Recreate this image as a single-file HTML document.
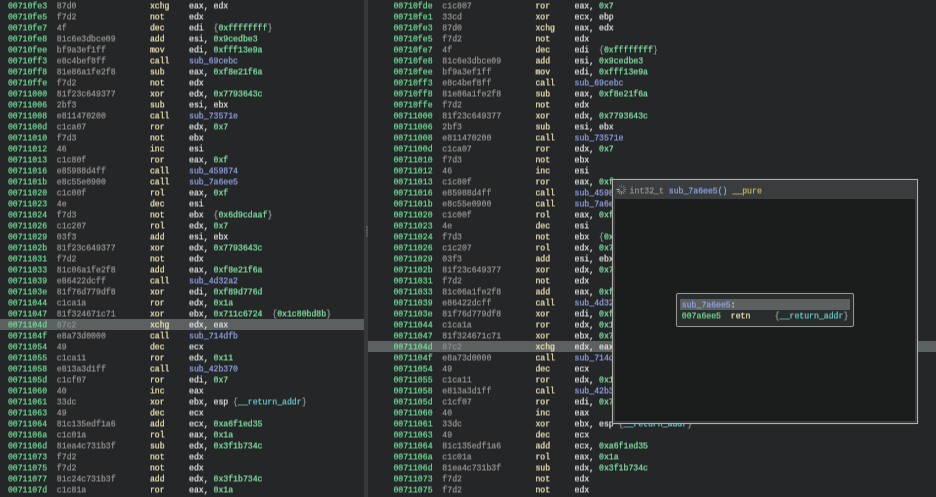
<!DOCTYPE html>
<html><head><meta charset="utf-8"><title>disassembly</title>
<style>
html,body{margin:0;padding:0;background:#242628;}
body{width:936px;height:497px;overflow:hidden;position:relative;font-family:"Liberation Mono","DejaVu Sans Mono",monospace;font-size:8.17px;line-height:11px;color:#e2e2e2;}
.pane{position:absolute;top:0;height:497px;overflow:hidden;background:#242628;}
#lp{left:0;width:364px;}
#rp{left:368px;width:568px;}
.rows{position:absolute;top:0;left:0;right:0;filter:url(#vb);}
.r{white-space:pre;height:11px;}
.r,.t,.l{-webkit-text-stroke:0.2px;}
#lp .r{padding-left:7.9px;}
#rp .r{padding-left:25.4px;}
.bar{position:absolute;left:0;right:0;height:11px;background:#5b6060;}
.a{color:#6ee096;}
.b{color:#9a9896;}
.hl .b{color:#8c9090;}
.m{color:#efe4b4;}
.n{color:#80e2a2;}
.s{color:#92a4e4;}
.p{color:#94acd8;}
.k{color:#c9b95c;}
.g{color:#9a9a9a;}
.v{color:#68cccc;}
#split{position:absolute;left:364px;top:0;width:4px;height:497px;background:#34383a;box-shadow:0 0 1px #34383a;}
#grip{position:absolute;left:366px;top:226px;width:2px;height:11px;background:repeating-linear-gradient(to bottom,#515556 0,#515556 2px,#45494a 2px,#45494a 3px);}
#pop{position:absolute;left:612px;top:179px;width:304px;height:243px;border:1px solid #b0aca8;background:#393d3e;box-shadow:0 0 1px rgba(176,172,168,.6);}
#pop .hd{position:absolute;left:0;top:0;right:0;height:19px;}
#pop .bd{position:absolute;left:2px;top:19px;right:2px;bottom:2px;background:#1b1d1d;}
#pop .t{position:absolute;left:16.6px;top:5px;white-space:pre;filter:url(#vb);}
#ib{position:absolute;left:676px;top:293px;width:176px;height:32px;border:1px solid #96928e;border-radius:2px;background:#2a2d2e;box-shadow:0 0 1px rgba(150,146,142,.7);}
#ib .h{position:absolute;left:3px;top:5px;width:170px;height:11px;background:#5b6060;}
#ib .l{position:absolute;left:4.8px;white-space:pre;filter:url(#vb);}
</style></head><body>
<svg width="0" height="0" style="position:absolute"><defs><filter id="vb" x="-2%" y="-2%" width="104%" height="104%" color-interpolation-filters="sRGB"><feConvolveMatrix order="1 2" kernelMatrix="0.5 0.5" targetX="0" targetY="1" edgeMode="duplicate" preserveAlpha="false"/></filter></defs></svg>
<div class="pane" id="lp"><div class="bar" style="top:319px"></div><div class="rows">
<div class="r"><span class="a">00710fe3</span>  <span class="b">87d0</span>               <span class="m">xchg</span>    eax, edx</div>
<div class="r"><span class="a">00710fe5</span>  <span class="b">f7d2</span>               <span class="m">not</span>     edx</div>
<div class="r"><span class="a">00710fe7</span>  <span class="b">4f</span>                 <span class="m">dec</span>     edi  <span class="g">{</span><span class="n">0xffffffff</span><span class="g">}</span></div>
<div class="r"><span class="a">00710fe8</span>  <span class="b">81c6e3dbce09</span>       <span class="m">add</span>     esi, <span class="n">0x9cedbe3</span></div>
<div class="r"><span class="a">00710fee</span>  <span class="b">bf9a3ef1ff</span>         <span class="m">mov</span>     edi, <span class="n">0xfff13e9a</span></div>
<div class="r"><span class="a">00710ff3</span>  <span class="b">e8c4bef8ff</span>         <span class="m">call</span>    <span class="s">sub_69cebc</span></div>
<div class="r"><span class="a">00710ff8</span>  <span class="b">81e86a1fe2f8</span>       <span class="m">sub</span>     eax, <span class="n">0xf8e21f6a</span></div>
<div class="r"><span class="a">00710ffe</span>  <span class="b">f7d2</span>               <span class="m">not</span>     edx</div>
<div class="r"><span class="a">00711000</span>  <span class="b">81f23c649377</span>       <span class="m">xor</span>     edx, <span class="n">0x7793643c</span></div>
<div class="r"><span class="a">00711006</span>  <span class="b">2bf3</span>               <span class="m">sub</span>     esi, ebx</div>
<div class="r"><span class="a">00711008</span>  <span class="b">e811470200</span>         <span class="m">call</span>    <span class="s">sub_73571e</span></div>
<div class="r"><span class="a">0071100d</span>  <span class="b">c1ca07</span>             <span class="m">ror</span>     edx, <span class="n">0x7</span></div>
<div class="r"><span class="a">00711010</span>  <span class="b">f7d3</span>               <span class="m">not</span>     ebx</div>
<div class="r"><span class="a">00711012</span>  <span class="b">46</span>                 <span class="m">inc</span>     esi</div>
<div class="r"><span class="a">00711013</span>  <span class="b">c1c80f</span>             <span class="m">ror</span>     eax, <span class="n">0xf</span></div>
<div class="r"><span class="a">00711016</span>  <span class="b">e85988d4ff</span>         <span class="m">call</span>    <span class="s">sub_459874</span></div>
<div class="r"><span class="a">0071101b</span>  <span class="b">e8c55e0900</span>         <span class="m">call</span>    <span class="s">sub_7a6ee5</span></div>
<div class="r"><span class="a">00711020</span>  <span class="b">c1c00f</span>             <span class="m">rol</span>     eax, <span class="n">0xf</span></div>
<div class="r"><span class="a">00711023</span>  <span class="b">4e</span>                 <span class="m">dec</span>     esi</div>
<div class="r"><span class="a">00711024</span>  <span class="b">f7d3</span>               <span class="m">not</span>     ebx  <span class="g">{</span><span class="n">0x6d9cdaaf</span><span class="g">}</span></div>
<div class="r"><span class="a">00711026</span>  <span class="b">c1c207</span>             <span class="m">rol</span>     edx, <span class="n">0x7</span></div>
<div class="r"><span class="a">00711029</span>  <span class="b">03f3</span>               <span class="m">add</span>     esi, ebx</div>
<div class="r"><span class="a">0071102b</span>  <span class="b">81f23c649377</span>       <span class="m">xor</span>     edx, <span class="n">0x7793643c</span></div>
<div class="r"><span class="a">00711031</span>  <span class="b">f7d2</span>               <span class="m">not</span>     edx</div>
<div class="r"><span class="a">00711033</span>  <span class="b">81c06a1fe2f8</span>       <span class="m">add</span>     eax, <span class="n">0xf8e21f6a</span></div>
<div class="r"><span class="a">00711039</span>  <span class="b">e86422dcff</span>         <span class="m">call</span>    <span class="s">sub_4d32a2</span></div>
<div class="r"><span class="a">0071103e</span>  <span class="b">81f76d779df8</span>       <span class="m">xor</span>     edi, <span class="n">0xf89d776d</span></div>
<div class="r"><span class="a">00711044</span>  <span class="b">c1ca1a</span>             <span class="m">ror</span>     edx, <span class="n">0x1a</span></div>
<div class="r"><span class="a">00711047</span>  <span class="b">81f324671c71</span>       <span class="m">xor</span>     ebx, <span class="n">0x711c6724</span>  <span class="g">{</span><span class="n">0x1c80bd8b</span><span class="g">}</span></div>
<div class="r hl"><span class="a">0071104d</span>  <span class="b">87c2</span>               <span class="m">xchg</span>    edx, eax</div>
<div class="r"><span class="a">0071104f</span>  <span class="b">e8a73d0000</span>         <span class="m">call</span>    <span class="s">sub_714dfb</span></div>
<div class="r"><span class="a">00711054</span>  <span class="b">49</span>                 <span class="m">dec</span>     ecx</div>
<div class="r"><span class="a">00711055</span>  <span class="b">c1ca11</span>             <span class="m">ror</span>     edx, <span class="n">0x11</span></div>
<div class="r"><span class="a">00711058</span>  <span class="b">e813a3d1ff</span>         <span class="m">call</span>    <span class="s">sub_42b370</span></div>
<div class="r"><span class="a">0071105d</span>  <span class="b">c1cf07</span>             <span class="m">ror</span>     edi, <span class="n">0x7</span></div>
<div class="r"><span class="a">00711060</span>  <span class="b">40</span>                 <span class="m">inc</span>     eax</div>
<div class="r"><span class="a">00711061</span>  <span class="b">33dc</span>               <span class="m">xor</span>     ebx, esp <span class="g">{</span><span class="v">__return_addr</span><span class="g">}</span></div>
<div class="r"><span class="a">00711063</span>  <span class="b">49</span>                 <span class="m">dec</span>     ecx</div>
<div class="r"><span class="a">00711064</span>  <span class="b">81c135edf1a6</span>       <span class="m">add</span>     ecx, <span class="n">0xa6f1ed35</span></div>
<div class="r"><span class="a">0071106a</span>  <span class="b">c1c01a</span>             <span class="m">rol</span>     eax, <span class="n">0x1a</span></div>
<div class="r"><span class="a">0071106d</span>  <span class="b">81ea4c731b3f</span>       <span class="m">sub</span>     edx, <span class="n">0x3f1b734c</span></div>
<div class="r"><span class="a">00711073</span>  <span class="b">f7d2</span>               <span class="m">not</span>     edx</div>
<div class="r"><span class="a">00711075</span>  <span class="b">f7d2</span>               <span class="m">not</span>     edx</div>
<div class="r"><span class="a">00711077</span>  <span class="b">81c24c731b3f</span>       <span class="m">add</span>     edx, <span class="n">0x3f1b734c</span></div>
<div class="r"><span class="a">0071107d</span>  <span class="b">c1c81a</span>             <span class="m">ror</span>     eax, <span class="n">0x1a</span></div>
</div></div>
<div id="split"></div><div id="grip"></div>
<div class="pane" id="rp"><div class="bar" style="top:341px"></div><div class="rows">
<div class="r"><span class="a">00710fde</span>  <span class="b">c1c807</span>             <span class="m">ror</span>     eax, <span class="n">0x7</span></div>
<div class="r"><span class="a">00710fe1</span>  <span class="b">33cd</span>               <span class="m">xor</span>     ecx, ebp</div>
<div class="r"><span class="a">00710fe3</span>  <span class="b">87d0</span>               <span class="m">xchg</span>    eax, edx</div>
<div class="r"><span class="a">00710fe5</span>  <span class="b">f7d2</span>               <span class="m">not</span>     edx</div>
<div class="r"><span class="a">00710fe7</span>  <span class="b">4f</span>                 <span class="m">dec</span>     edi  <span class="g">{</span><span class="n">0xffffffff</span><span class="g">}</span></div>
<div class="r"><span class="a">00710fe8</span>  <span class="b">81c6e3dbce09</span>       <span class="m">add</span>     esi, <span class="n">0x9cedbe3</span></div>
<div class="r"><span class="a">00710fee</span>  <span class="b">bf9a3ef1ff</span>         <span class="m">mov</span>     edi, <span class="n">0xfff13e9a</span></div>
<div class="r"><span class="a">00710ff3</span>  <span class="b">e8c4bef8ff</span>         <span class="m">call</span>    <span class="s">sub_69cebc</span></div>
<div class="r"><span class="a">00710ff8</span>  <span class="b">81e86a1fe2f8</span>       <span class="m">sub</span>     eax, <span class="n">0xf8e21f6a</span></div>
<div class="r"><span class="a">00710ffe</span>  <span class="b">f7d2</span>               <span class="m">not</span>     edx</div>
<div class="r"><span class="a">00711000</span>  <span class="b">81f23c649377</span>       <span class="m">xor</span>     edx, <span class="n">0x7793643c</span></div>
<div class="r"><span class="a">00711006</span>  <span class="b">2bf3</span>               <span class="m">sub</span>     esi, ebx</div>
<div class="r"><span class="a">00711008</span>  <span class="b">e811470200</span>         <span class="m">call</span>    <span class="s">sub_73571e</span></div>
<div class="r"><span class="a">0071100d</span>  <span class="b">c1ca07</span>             <span class="m">ror</span>     edx, <span class="n">0x7</span></div>
<div class="r"><span class="a">00711010</span>  <span class="b">f7d3</span>               <span class="m">not</span>     ebx</div>
<div class="r"><span class="a">00711012</span>  <span class="b">46</span>                 <span class="m">inc</span>     esi</div>
<div class="r"><span class="a">00711013</span>  <span class="b">c1c80f</span>             <span class="m">ror</span>     eax, <span class="n">0xf</span></div>
<div class="r"><span class="a">00711016</span>  <span class="b">e85988d4ff</span>         <span class="m">call</span>    <span class="s">sub_459874</span></div>
<div class="r"><span class="a">0071101b</span>  <span class="b">e8c55e0900</span>         <span class="m">call</span>    <span class="s">sub_7a6ee5</span></div>
<div class="r"><span class="a">00711020</span>  <span class="b">c1c00f</span>             <span class="m">rol</span>     eax, <span class="n">0xf</span></div>
<div class="r"><span class="a">00711023</span>  <span class="b">4e</span>                 <span class="m">dec</span>     esi</div>
<div class="r"><span class="a">00711024</span>  <span class="b">f7d3</span>               <span class="m">not</span>     ebx  <span class="g">{</span><span class="n">0x6d9cdaaf</span><span class="g">}</span></div>
<div class="r"><span class="a">00711026</span>  <span class="b">c1c207</span>             <span class="m">rol</span>     edx, <span class="n">0x7</span></div>
<div class="r"><span class="a">00711029</span>  <span class="b">03f3</span>               <span class="m">add</span>     esi, ebx</div>
<div class="r"><span class="a">0071102b</span>  <span class="b">81f23c649377</span>       <span class="m">xor</span>     edx, <span class="n">0x7793643c</span></div>
<div class="r"><span class="a">00711031</span>  <span class="b">f7d2</span>               <span class="m">not</span>     edx</div>
<div class="r"><span class="a">00711033</span>  <span class="b">81c06a1fe2f8</span>       <span class="m">add</span>     eax, <span class="n">0xf8e21f6a</span></div>
<div class="r"><span class="a">00711039</span>  <span class="b">e86422dcff</span>         <span class="m">call</span>    <span class="s">sub_4d32a2</span></div>
<div class="r"><span class="a">0071103e</span>  <span class="b">81f76d779df8</span>       <span class="m">xor</span>     edi, <span class="n">0xf89d776d</span></div>
<div class="r"><span class="a">00711044</span>  <span class="b">c1ca1a</span>             <span class="m">ror</span>     edx, <span class="n">0x1a</span></div>
<div class="r"><span class="a">00711047</span>  <span class="b">81f324671c71</span>       <span class="m">xor</span>     ebx, <span class="n">0x711c6724</span>  <span class="g">{</span><span class="n">0x1c80bd8b</span><span class="g">}</span></div>
<div class="r hl"><span class="a">0071104d</span>  <span class="b">87c2</span>               <span class="m">xchg</span>    edx, eax</div>
<div class="r"><span class="a">0071104f</span>  <span class="b">e8a73d0000</span>         <span class="m">call</span>    <span class="s">sub_714dfb</span></div>
<div class="r"><span class="a">00711054</span>  <span class="b">49</span>                 <span class="m">dec</span>     ecx</div>
<div class="r"><span class="a">00711055</span>  <span class="b">c1ca11</span>             <span class="m">ror</span>     edx, <span class="n">0x11</span></div>
<div class="r"><span class="a">00711058</span>  <span class="b">e813a3d1ff</span>         <span class="m">call</span>    <span class="s">sub_42b370</span></div>
<div class="r"><span class="a">0071105d</span>  <span class="b">c1cf07</span>             <span class="m">ror</span>     edi, <span class="n">0x7</span></div>
<div class="r"><span class="a">00711060</span>  <span class="b">40</span>                 <span class="m">inc</span>     eax</div>
<div class="r"><span class="a">00711061</span>  <span class="b">33dc</span>               <span class="m">xor</span>     ebx, esp <span class="g">{</span><span class="v">__return_addr</span><span class="g">}</span></div>
<div class="r"><span class="a">00711063</span>  <span class="b">49</span>                 <span class="m">dec</span>     ecx</div>
<div class="r"><span class="a">00711064</span>  <span class="b">81c135edf1a6</span>       <span class="m">add</span>     ecx, <span class="n">0xa6f1ed35</span></div>
<div class="r"><span class="a">0071106a</span>  <span class="b">c1c01a</span>             <span class="m">rol</span>     eax, <span class="n">0x1a</span></div>
<div class="r"><span class="a">0071106d</span>  <span class="b">81ea4c731b3f</span>       <span class="m">sub</span>     edx, <span class="n">0x3f1b734c</span></div>
<div class="r"><span class="a">00711073</span>  <span class="b">f7d2</span>               <span class="m">not</span>     edx</div>
<div class="r"><span class="a">00711075</span>  <span class="b">f7d2</span>               <span class="m">not</span>     edx</div>
</div></div>
<div id="pop"><div class="hd"><svg style="position:absolute;left:3px;top:4px" width="11" height="11" viewBox="0 0 11 11"><g stroke="#b4b4b4" stroke-linecap="butt"><line x1="5.50" y1="3.50" x2="5.50" y2="0.50" stroke-opacity="0.42" stroke-width="0.73"/><line x1="6.50" y1="3.77" x2="8.00" y2="1.17" stroke-opacity="0.48" stroke-width="0.76"/><line x1="7.23" y1="4.50" x2="9.83" y2="3.00" stroke-opacity="0.54" stroke-width="0.79"/><line x1="7.50" y1="5.50" x2="10.50" y2="5.50" stroke-opacity="0.61" stroke-width="0.82"/><line x1="7.23" y1="6.50" x2="9.83" y2="8.00" stroke-opacity="0.68" stroke-width="0.85"/><line x1="6.50" y1="7.23" x2="8.00" y2="9.83" stroke-opacity="0.74" stroke-width="0.88"/><line x1="5.50" y1="7.50" x2="5.50" y2="10.50" stroke-opacity="0.80" stroke-width="0.91"/><line x1="4.50" y1="7.23" x2="3.00" y2="9.83" stroke-opacity="0.87" stroke-width="0.94"/><line x1="3.77" y1="6.50" x2="1.17" y2="8.00" stroke-opacity="0.94" stroke-width="0.97"/><line x1="3.50" y1="5.50" x2="0.50" y2="5.50" stroke-opacity="1.00" stroke-width="1.00"/><line x1="3.77" y1="4.50" x2="1.17" y2="3.00" stroke-opacity="0.28" stroke-width="0.67"/><line x1="4.50" y1="3.77" x2="3.00" y2="1.17" stroke-opacity="0.35" stroke-width="0.70"/></g></svg><div class="t"><span class="b">int32_t</span> <span class="s">sub_7a6ee5</span><span class="p">()</span> <span class="k">__pure</span></div></div><div class="bd"></div></div>
<div id="ib"><div class="h"></div><div class="l" style="top:5px"><span class="s">sub_7a6ee5</span>:</div><div class="l" style="top:16px"><span class="a">007a6ee5</span>  <span class="m">retn</span>     <span class="g">{</span><span class="v">__return_addr</span><span class="g">}</span></div></div>
</body></html>
